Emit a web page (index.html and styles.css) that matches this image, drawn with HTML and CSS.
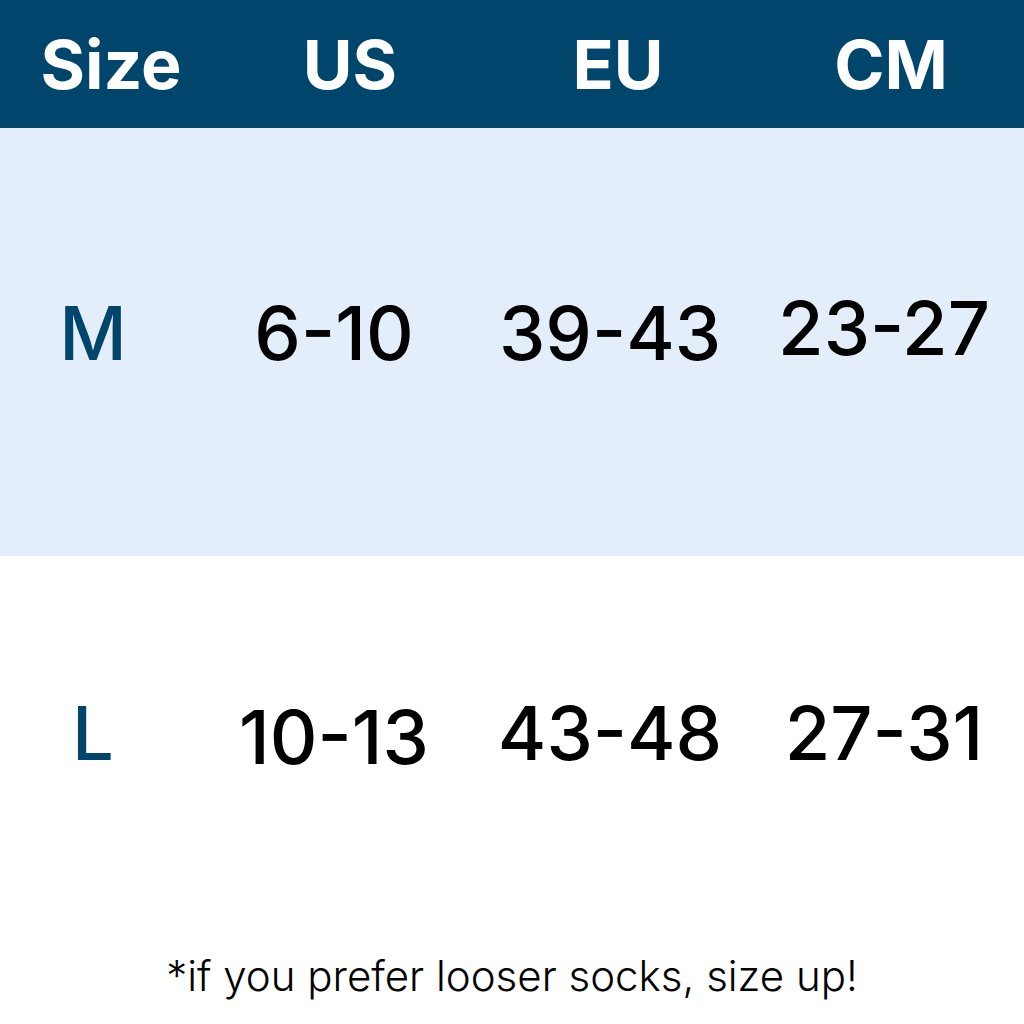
FILE: index.html
```html
<!DOCTYPE html>
<html>
<head>
<meta charset="utf-8">
<link rel="stylesheet" href="styles.css">
</head>
<body>
<div class="chart">
  <div class="row head">
    <div class="cell">Size</div>
    <div class="cell">US</div>
    <div class="cell">EU</div>
    <div class="cell">CM</div>
  </div>
  <div class="row body m">
    <div class="cell size">M</div>
    <div class="cell">6-10</div>
    <div class="cell">39-43</div>
    <div class="cell raised">23-27</div>
  </div>
  <div class="row body l">
    <div class="cell size">L</div>
    <div class="cell lowered">10-13</div>
    <div class="cell">43-48</div>
    <div class="cell">27-31</div>
  </div>
  <div class="note">*if you prefer looser socks, size up!</div>
</div>
</body>
</html>
```
FILE: styles.css
```css
html, body {
  margin: 0;
  padding: 0;
  background: #ffffff;
}
.chart {
  width: 1024px;
  height: 1024px;
  font-family: Inter, "Noto Sans", sans-serif;
  display: flex;
  flex-direction: column;
  overflow: hidden;
}
.row {
  display: grid;
  align-items: center;
}
.cell {
  text-align: center;
}
.head {
  grid-template-columns: 222px 256px 280px 266px;
  height: 128px;
  background: #00466c;
  color: #ffffff;
  font-weight: 700;
  font-size: 68px;
}
.body {
  grid-template-columns: 186px 296px 256px 286px;
  font-size: 74px;
  color: #000000;
  font-weight: 500;
}
.body .cell:last-child {
  padding-left: 6px;
}
.m {
  height: 428px;
  padding-bottom: 18px;
  box-sizing: border-box;
  background: #e3eefa;
}
.l {
  height: 354px;
}
.raised {
  padding-bottom: 10px;
}
.lowered {
  padding-top: 8px;
}
.size {
  color: #00466c;
}
.note {
  flex: 1;
  display: flex;
  align-items: center;
  justify-content: center;
  padding-top: 16px;
  font-size: 42px;
  font-weight: 300;
  color: #000000;
}
```
